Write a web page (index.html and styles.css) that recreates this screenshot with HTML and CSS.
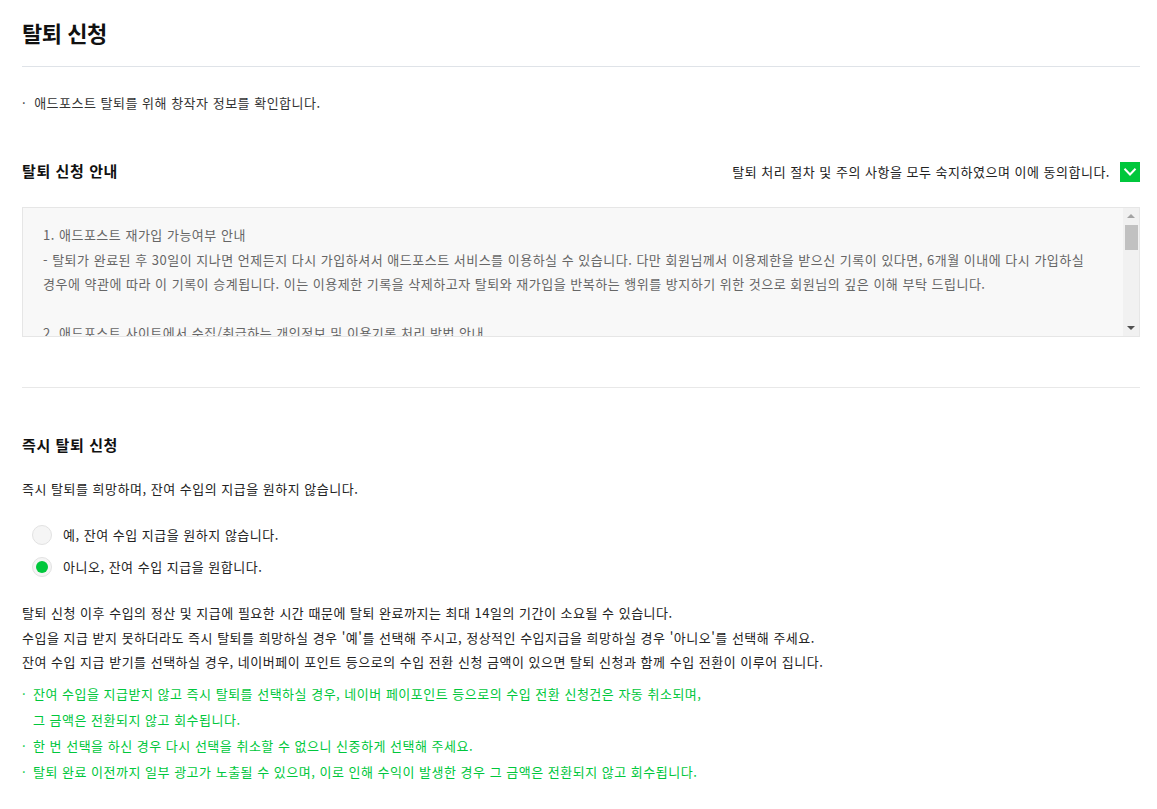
FILE: index.html
```html
<!DOCTYPE html>
<html lang="ko">
<head>
<meta charset="utf-8">
<link rel="stylesheet" href="styles.css">
</head>
<body>
<div class="page">
  <h1 class="title">탈퇴 신청</h1>
  <p class="intro"><span class="dot">·</span>애드포스트 탈퇴를 위해 창작자 정보를 확인합니다.</p>

  <div class="guide-head">
    <h2 class="sub">탈퇴 신청 안내</h2>
    <label class="agree">
      <span>탈퇴 처리 절차 및 주의 사항을 모두 숙지하였으며 이에 동의합니다.</span>
      <span class="check"><svg width="14" height="10" viewBox="0 0 14 10"><path d="M1.5 1.8 L7 7.5 L12.5 1.8" fill="none" stroke="#fff" stroke-width="2"/></svg></span>
    </label>
  </div>

  <div class="terms">
    <div class="terms-body">
      <p>1. 애드포스트 재가입 가능여부 안내<br>- 탈퇴가 완료된 후 30일이 지나면 언제든지 다시 가입하셔서 애드포스트 서비스를 이용하실 수 있습니다. 다만 회원님께서 이용제한을 받으신 기록이 있다면, 6개월 이내에 다시 가입하실<br>경우에 약관에 따라 이 기록이 승계됩니다. 이는 이용제한 기록을 삭제하고자 탈퇴와 재가입을 반복하는 행위를 방지하기 위한 것으로 회원님의 깊은 이해 부탁 드립니다.</p>
      <p>2. 애드포스트 사이트에서 수집/취급하는 개인정보 및 이용기록 처리 방법 안내<br>- 탈퇴 시 회원님의 개인정보 및 이용기록은 개인정보 처리방침에 따라 일정 기간 보관된 후 파기됩니다.</p>
    </div>
    <div class="scrollbar">
      <span class="arrow up"></span>
      <span class="track"><span class="thumb"></span></span>
      <span class="arrow down"></span>
    </div>
  </div>

  <hr class="divider">

  <h2 class="sub sub2">즉시 탈퇴 신청</h2>
  <p class="question">즉시 탈퇴를 희망하며, 잔여 수입의 지급을 원하지 않습니다.</p>

  <div class="radios">
    <label class="radio"><span class="circle"></span>예, 잔여 수입 지급을 원하지 않습니다.</label>
    <label class="radio on"><span class="circle"></span>아니오, 잔여 수입 지급을 원합니다.</label>
  </div>

  <p class="desc">탈퇴 신청 이후 수입의 정산 및 지급에 필요한 시간 때문에 탈퇴 완료까지는 최대 14일의 기간이 소요될 수 있습니다.<br>수입을 지급 받지 못하더라도 즉시 탈퇴를 희망하실 경우 '예'를 선택해 주시고, 정상적인 수입지급을 희망하실 경우 '아니오'를 선택해 주세요.<br>잔여 수입 지급 받기를 선택하실 경우, 네이버페이 포인트 등으로의 수입 전환 신청 금액이 있으면 탈퇴 신청과 함께 수입 전환이 이루어 집니다.</p>

  <ul class="notes">
    <li>잔여 수입을 지급받지 않고 즉시 탈퇴를 선택하실 경우, 네이버 페이포인트 등으로의 수입 전환 신청건은 자동 취소되며,<br>그 금액은 전환되지 않고 회수됩니다.</li>
    <li>한 번 선택을 하신 경우 다시 선택을 취소할 수 없으니 신중하게 선택해 주세요.</li>
    <li>탈퇴 완료 이전까지 일부 광고가 노출될 수 있으며, 이로 인해 수익이 발생한 경우 그 금액은 전환되지 않고 회수됩니다.</li>
  </ul>
</div>
</body>
</html>
```

FILE: styles.css
```css
* { box-sizing: border-box; }
html, body { margin: 0; padding: 0; background: #fff; }
body {
  font-family: "Noto Sans CJK KR", "Noto Sans", sans-serif;
  color: #222;
  font-size: 13px;
  letter-spacing: 0.5px;
}
.page { padding: 0 17px 0 22px; }
.title {
  margin: 0;
  padding-top: 16px;
  height: 67px;
  font-size: 22px;
  font-weight: 700;
  line-height: 32px;
  letter-spacing: -0.5px;
  color: #111;
  border-bottom: 1px solid #dfe3e8;
}
.intro {
  margin: 0;
  padding-top: 26px;
  line-height: 20px;
  color: #333;
}
.dot { margin-right: 8px; }
.guide-head {
  display: flex;
  justify-content: space-between;
  align-items: center;
  margin-top: 43px;
  height: 30px;
}
.sub {
  margin: 0;
  font-size: 15px;
  font-weight: 700;
  line-height: 22px;
  color: #111;
  letter-spacing: 0.6px;
}
.agree {
  display: flex;
  align-items: center;
  gap: 10px;
  color: #222;
}
.check {
  width: 20px; height: 20px;
  margin-top: 1px;
  background: #00c73c;
  display: flex; align-items: center; justify-content: center;
}
.terms {
  margin-top: 21px;
  height: 130px;
  display: flex;
  background: #f8f8f8;
  border: 1px solid #e6e6e6;
  overflow: hidden;
}
.terms-body {
  flex: 1;
  min-width: 0;
  padding: 15px 30px 0 20px;
  color: #666;
  line-height: 24.5px;
}
.terms-body p { margin: 0 0 24.5px; }
.scrollbar {
  width: 16px;
  flex: none;
  background: #f1f1f1;
  display: flex;
  flex-direction: column;
  align-items: center;
}
.arrow {
  width: 16px;
  height: 16px;
  flex: none;
  display: flex;
  align-items: center;
  justify-content: center;
}
.arrow::before {
  content: "";
  width: 0; height: 0;
  border-left: 4px solid transparent;
  border-right: 4px solid transparent;
}
.arrow.up::before { border-bottom: 4px solid #a3a3a3; }
.arrow.down::before { border-top: 4px solid #505050; }
.track {
  flex: 1;
  width: 100%;
  display: flex;
  justify-content: flex-end;
  padding-top: 1px;
}
.thumb {
  width: 13px;
  height: 25px;
  background: #c1c1c1;
  margin-right: 1px;
}
.divider {
  margin: 50px 0 0;
  border: 0;
  border-top: 1px solid #e8e8e8;
}
.sub2 { margin-top: 46px; }
.question {
  margin: 22px 0 0;
  line-height: 22px;
  color: #222;
}
.radios {
  margin-top: 25px;
  padding-left: 10px;
  display: flex;
  flex-direction: column;
  gap: 12px;
}
.radio {
  display: flex;
  align-items: center;
  gap: 11px;
  line-height: 20px;
}
.circle {
  width: 20px; height: 20px;
  border-radius: 50%;
  background: #f5f5f5;
  border: 1px solid #e2e2e2;
  display: flex; align-items: center; justify-content: center;
}
.radio.on .circle::after {
  content: "";
  width: 12px; height: 12px;
  border-radius: 50%;
  background: #00c73c;
}
.desc {
  margin: 24px 0 0;
  line-height: 24.5px;
  color: #222;
}
.notes {
  list-style: none;
  margin: 6px 0 0;
  padding: 0;
  color: #00c73c;
  line-height: 26px;
}
.notes li {
  position: relative;
  padding-left: 11px;
}
.notes li::before {
  content: "·";
  position: absolute;
  left: 0;
  top: 0;
}
```
